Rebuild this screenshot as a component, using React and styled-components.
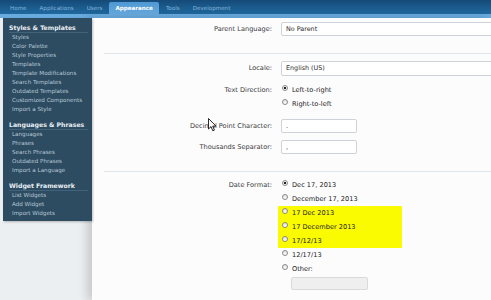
import styled, { createGlobalStyle } from "styled-components";

const GlobalStyle = createGlobalStyle`
  body {
    margin: 0;
    background: #eceff1;
  }
  * {
    box-sizing: border-box;
  }
`;

const tabs = ["Home", "Applications", "Users", "Appearance", "Tools", "Development"];

const sidebar = [
  {
    title: "Styles & Templates",
    items: [
      "Styles",
      "Color Palette",
      "Style Properties",
      "Templates",
      "Template Modifications",
      "Search Templates",
      "Outdated Templates",
      "Customized Components",
      "Import a Style",
    ],
  },
  {
    title: "Languages & Phrases",
    items: ["Languages", "Phrases", "Search Phrases", "Outdated Phrases", "Import a Language"],
  },
  {
    title: "Widget Framework",
    items: ["List Widgets", "Add Widget", "Import Widgets"],
  },
];

export default function App() {
  return (
    <Page>
      <GlobalStyle />
      <TopNav>
        {tabs.map((t) => (
          <Tab key={t} $active={t === "Appearance"}>
            {t}
          </Tab>
        ))}
      </TopNav>
      <Strip />
      <Body>
        <Sidebar>
          {sidebar.map((group) => (
            <Group key={group.title}>
              <GroupTitle>{group.title}</GroupTitle>
              {group.items.map((item) => (
                <Item key={item}>{item}</Item>
              ))}
            </Group>
          ))}
        </Sidebar>
        <Main>
          <Section $top={4} $bottom={17}>
            <Row>
              <Label>Parent Language:</Label>
              <Input $width={240}>No Parent</Input>
            </Row>
          </Section>
          <Section $top={7} $bottom={17}>
            <Row>
              <Label>Locale:</Label>
              <Input $width={240} $height={15}>English (US)</Input>
            </Row>
            <Row $gap={7}>
              <Label>Text Direction:</Label>
              <Options>
                <Option>
                  <Radio $checked />
                  Left-to-right
                </Option>
                <Option>
                  <Radio />
                  Right-to-left
                </Option>
              </Options>
            </Row>
            <Row $gap={8}>
              <Label>Decimal Point Character:</Label>
              <Input $width={76}>.</Input>
            </Row>
            <Row $gap={7}>
              <Label>Thousands Separator:</Label>
              <Input $width={76}>,</Input>
            </Row>
          </Section>
          <Section $top={6} $bottom={20} $last>
            <Row>
              <Label>Date Format:</Label>
              <Options>
                <Option>
                  <Radio $checked />
                  Dec 17, 2013
                </Option>
                <Option>
                  <Radio />
                  December 17, 2013
                </Option>
                <Highlight>
                  <Option>
                    <Radio />
                    17 Dec 2013
                  </Option>
                  <Option>
                    <Radio />
                    17 December 2013
                  </Option>
                  <Option>
                    <Radio />
                    17/12/13
                  </Option>
                </Highlight>
                <Option>
                  <Radio />
                  12/17/13
                </Option>
                <Option>
                  <Radio />
                  Other:
                </Option>
                <OtherInput />
              </Options>
            </Row>
          </Section>
        </Main>
      </Body>
      <Cursor width="9" height="14" viewBox="0 0 9 14">
        <path
          d="M0.5 0.5 L0.5 11 L3 8.6 L4.8 12.8 L6.4 12.1 L4.7 8.1 L8 8.1 Z"
          fill="#fff"
          stroke="#111"
          strokeWidth="0.9"
          strokeLinejoin="round"
        />
      </Cursor>
    </Page>
  );
}

const Page = styled.div`
  position: relative;
  width: 491px;
  height: 300px;
  overflow: hidden;
  background: #eceff1;
  font-family: "DejaVu Sans", Verdana, sans-serif;
`;

const TopNav = styled.div`
  height: 14px;
  display: flex;
  align-items: flex-end;
  gap: 0;
  padding-left: 4px;
  background: linear-gradient(180deg, #154a78 0%, #1c5d90 60%, #2069a0 100%);
`;

const Tab = styled.div`
  height: 12px;
  line-height: 12px;
  padding: 0 6px;
  margin-right: 1px;
  font-size: 5.6px;
  font-weight: ${(p) => (p.$active ? "bold" : "normal")};
  color: ${(p) => (p.$active ? "#ffffff" : "#86b5da")};
  background: ${(p) => (p.$active ? "linear-gradient(180deg, #4f98d2, #66aadf)" : "transparent")};
  border-radius: 2px 2px 0 0;
`;

const Strip = styled.div`
  height: 4px;
  background: #68abdf;
`;

const Body = styled.div`
  display: flex;
  align-items: flex-start;
  padding-left: 3px;
`;

const Sidebar = styled.div`
  position: relative;
  z-index: 1;
  width: 89px;
  flex-shrink: 0;
  background: #2d4b61;
  padding: 5px 4px 3px 6px;
  box-shadow: 1px 1px 2px rgba(0, 0, 0, 0.25);
`;

const Group = styled.div`
  & + & {
    margin-top: 6px;
  }
`;

const GroupTitle = styled.div`
  height: 10px;
  line-height: 9px;
  font-size: 6.2px;
  font-weight: bold;
  color: #e9eff4;
  border-bottom: 1px solid #40627b;
  white-space: nowrap;
`;

const Item = styled.div`
  height: 9px;
  line-height: 9px;
  padding-left: 3px;
  font-size: 5.6px;
  color: #b7c9d6;
  white-space: nowrap;
`;

const Main = styled.div`
  flex: 1;
  min-width: 0;
  height: 282px;
  overflow: hidden;
  background: #fcfcfd;
  padding-left: 12px;
  box-shadow: -5px 0 9px rgba(0, 0, 0, 0.16);
`;

const Section = styled.div`
  padding: ${(p) => p.$top}px 0 ${(p) => p.$bottom}px;
  border-bottom: ${(p) => (p.$last ? "none" : "1px solid #dfe6ec")};
`;

const Row = styled.div`
  display: grid;
  grid-template-columns: 168px 1fr;
  column-gap: 9px;
  align-items: start;
  margin-top: ${(p) => p.$gap || 0}px;
`;

const Label = styled.div`
  text-align: right;
  font-size: 6.6px;
  line-height: 14px;
  color: #3a3a3a;
  white-space: nowrap;
`;

const Input = styled.div`
  width: ${(p) => p.$width}px;
  height: ${(p) => p.$height || 14}px;
  line-height: ${(p) => (p.$height || 14) - 2}px;
  padding: 0 4px;
  font-size: 6.4px;
  color: #2a2a2a;
  background: #ffffff;
  border: 1px solid #cdd3d8;
  border-radius: 2px;
  white-space: nowrap;
`;

const Options = styled.div`
  display: flex;
  flex-direction: column;
  margin-left: 1px;
`;

const Highlight = styled.div`
  display: flex;
  flex-direction: column;
  width: 124px;
  margin-left: -4px;
  padding-left: 4px;
  background: #fafa00;
`;

const Option = styled.div`
  display: flex;
  align-items: center;
  gap: 4px;
  height: 14px;
  font-size: 6.6px;
  color: #222;
  white-space: nowrap;
`;

const Radio = styled.span`
  width: 6px;
  height: 6px;
  flex-shrink: 0;
  align-self: flex-start;
  margin-top: 2px;
  border-radius: 50%;
  border: 1px solid #8a8a8a;
  background: ${(p) =>
    p.$checked
      ? "radial-gradient(circle, #222 0 1.3px, #fff 1.6px)"
      : "linear-gradient(180deg, #e2e2e2, #ffffff)"};
`;

const OtherInput = styled.div`
  width: 77px;
  height: 13px;
  margin: 1px 0 0 9px;
  background: #efefef;
  border: 1px solid #dadada;
  border-radius: 2px;
`;

const Cursor = styled.svg`
  position: absolute;
  left: 208px;
  top: 118px;
`;
